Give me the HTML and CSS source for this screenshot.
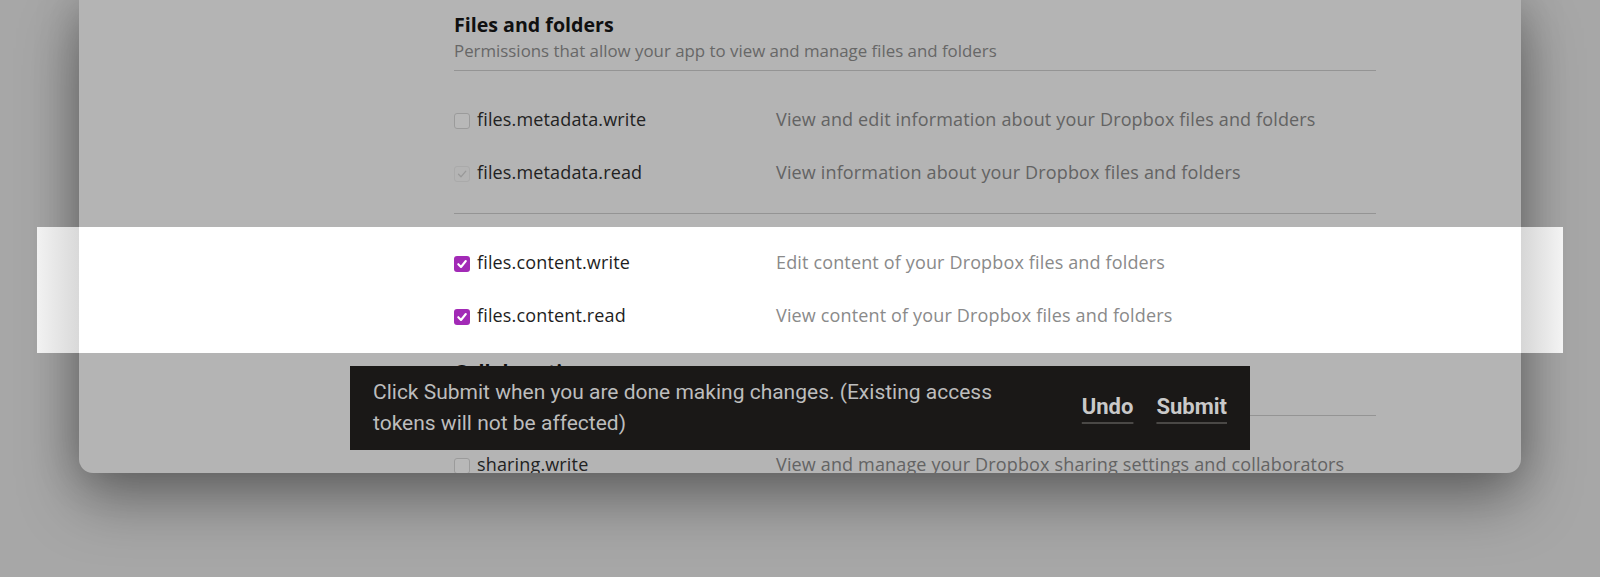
FILE: index.html
```html
<!DOCTYPE html>
<html lang="en">
<head>
<meta charset="utf-8">
<title>Permissions</title>
<link rel="stylesheet" href="styles.css">
</head>
<body>
<div class="stage">
  <div class="window">
    <section class="scope">
      <header class="scope-head">
        <h2 class="scope-title">Files and folders</h2>
        <p class="scope-sub">Permissions that allow your app to view and manage files and folders</p>
      </header>
      <div class="perm-group">
        <div class="perm">
          <label class="perm-name"><span class="cb"></span>files.metadata.write</label>
          <span class="perm-desc">View and edit information about your Dropbox files and folders</span>
        </div>
        <div class="perm">
          <label class="perm-name"><span class="cb cb-disabled"><svg viewBox="0 0 16 16" width="16" height="16"><path d="M4.5 8.3 L7 10.8 L11.8 5.2" fill="none" stroke="#999" stroke-width="1.3" stroke-linecap="round" stroke-linejoin="round"/></svg></span>files.metadata.read</label>
          <span class="perm-desc">View information about your Dropbox files and folders</span>
        </div>
      </div>
      <div class="perm-group is-highlighted">
        <div class="perm">
          <label class="perm-name"><span class="cb cb-checked"><svg viewBox="0 0 16 16" width="16" height="16"><path d="M4.3 8.2 L7 11 L11.8 5" fill="none" stroke="#fff" stroke-width="2.1" stroke-linecap="round" stroke-linejoin="round"/></svg></span>files.content.write</label>
          <span class="perm-desc">Edit content of your Dropbox files and folders</span>
        </div>
        <div class="perm">
          <label class="perm-name"><span class="cb cb-checked"><svg viewBox="0 0 16 16" width="16" height="16"><path d="M4.3 8.2 L7 11 L11.8 5" fill="none" stroke="#fff" stroke-width="2.1" stroke-linecap="round" stroke-linejoin="round"/></svg></span>files.content.read</label>
          <span class="perm-desc">View content of your Dropbox files and folders</span>
        </div>
      </div>
    </section>
    <section class="scope scope-next">
      <header class="scope-head">
        <h2 class="scope-title">Collaboration</h2>
        <p class="scope-sub">Permissions that allow your app to view and manage sharing and collaboration settings</p>
      </header>
      <div class="perm-group">
        <div class="perm">
          <label class="perm-name"><span class="cb"></span>sharing.write</label>
          <span class="perm-desc">View and manage your Dropbox sharing settings and collaborators</span>
        </div>
      </div>
    </section>
  </div>
  <div class="toast">
    <p class="toast-msg">Click Submit when you are done making changes. (Existing access tokens will not be affected)</p>
    <div class="toast-actions">
      <span class="toast-btn">Undo</span>
      <span class="toast-btn">Submit</span>
    </div>
  </div>
</div>
</body>
</html>
```

FILE: styles.css
```css
html, body {
  margin: 0;
  padding: 0;
}

body {
  background: #a7a7a7;
  width: 1600px;
  height: 577px;
  overflow: hidden;
  font-family: "Open Sans", "Noto Sans", sans-serif;
}

.stage {
  position: relative;
  width: 1600px;
  height: 577px;
}

.window {
  box-sizing: border-box;
  margin-left: 79px;
  width: 1442px;
  height: 473px;
  padding: 12px 145px 0 375px;
  background: #b4b4b4;
  border-radius: 0 0 14px 14px;
  overflow-x: visible;
  overflow-y: clip;
  box-shadow: 0 0 45px rgba(0, 0, 0, 0.22), 0 28px 60px rgba(0, 0, 0, 0.34);
}

.scope-head {
  padding-bottom: 8px;
  border-bottom: 1px solid #949494;
}

.scope-title {
  margin: 0;
  font-size: 19.6px;
  line-height: 26px;
  font-weight: 700;
  color: #101010;
}

.scope-sub {
  margin: 2px 0 0;
  font-size: 16.85px;
  line-height: 22px;
  color: #676767;
}

.scope-next {
  margin-top: 6px;
}

.scope-next .scope-head {
  padding-bottom: 6px;
}

.perm-group {
  padding: 21px 0 15px;
  border-bottom: 1px solid #949494;
}

.perm-group.is-highlighted {
  margin: 13px -187px 0 -417px;
  padding: 8px 187px 12px 417px;
  border-bottom: none;
  background: linear-gradient(to right,
    #f2f2f2 0,
    #d9d9d9 42px,
    #ffffff 42px,
    #ffffff calc(100% - 42px),
    #d6d6d6 calc(100% - 42px),
    #f4f4f4 100%);
}

.perm {
  display: grid;
  grid-template-columns: 322px 1fr;
  align-items: center;
  height: 53px;
}

.perm-name {
  display: flex;
  align-items: center;
  gap: 7px;
  font-size: 18px;
  line-height: 24px;
  letter-spacing: 0.15px;
  color: #222222;
}

.perm-desc {
  font-size: 18px;
  line-height: 24px;
  letter-spacing: 0.15px;
  color: #636363;
  white-space: nowrap;
}

.is-highlighted .perm-name {
  color: #1e1e1e;
}

.is-highlighted .perm-desc {
  color: #8a8a8a;
}

.cb {
  box-sizing: border-box;
  flex: none;
  width: 16px;
  height: 16px;
  margin-top: 4px;
  border: 1px solid #9b9b9b;
  border-radius: 3px;
  background: #b8b8b8;
  display: flex;
  align-items: center;
  justify-content: center;
}

.cb svg {
  display: block;
  flex: none;
}

.cb-disabled {
  border-color: #aaaaaa;
  background: #b4b4b4;
}

.cb-checked {
  border: none;
  background: #a22ab6;
}

.toast {
  position: absolute;
  left: 350px;
  top: 366px;
  box-sizing: border-box;
  width: 900px;
  height: 84px;
  padding: 11px 23px;
  display: flex;
  align-items: center;
  justify-content: space-between;
  background: #1a1817;
  font-family: Roboto, "Liberation Sans", sans-serif;
  color: #bdbdbd;
}

.toast-msg {
  margin: 0;
  width: 650px;
  font-size: 21px;
  line-height: 31px;
}

.toast-actions {
  display: flex;
  gap: 23px;
  margin-top: -3px;
}

.toast-btn {
  font-size: 22px;
  line-height: 26px;
  font-weight: 700;
  color: #c9c9c9;
  text-decoration: underline;
  text-decoration-color: #4a4846;
  text-decoration-thickness: 2px;
  text-underline-offset: 8px;
}
```
